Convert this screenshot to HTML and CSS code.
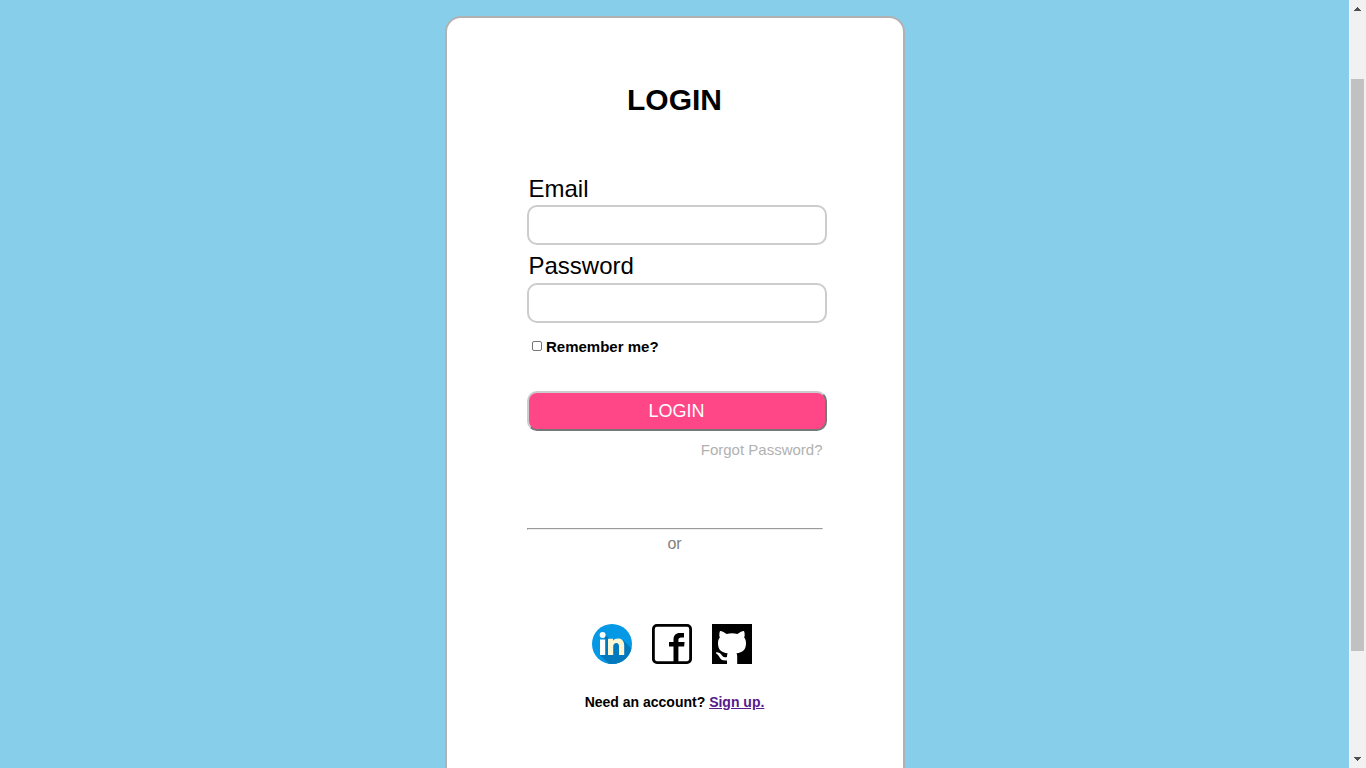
FILE: index.html
```html
<!DOCTYPE html>
<html lang="en">
<head>
<meta charset="utf-8">
<title>Login</title>
<link rel="stylesheet" href="styles.css">
</head>
<body>
<main class="page">
  <form class="card">
    <h1 class="title">LOGIN</h1>
    <label class="label" for="email">Email</label>
    <input class="field" id="email" type="email">
    <label class="label label-next" for="password">Password</label>
    <input class="field" id="password" type="password">
    <label class="remember"><input class="check" type="checkbox"><span>Remember me?</span></label>
    <button class="submit" type="button">LOGIN</button>
    <div class="forgot">Forgot Password?</div>
    <hr class="rule">
    <div class="or">or</div>
    <div class="socials">
      <svg width="40" height="40" viewBox="0 0 40 40">
        <defs><clipPath id="disc"><circle cx="20" cy="20" r="20"/></clipPath></defs>
        <circle cx="20" cy="20" r="20" fill="#0599e5"/>
        <path d="M8 31L13.500 11L20 17L31 16L44 29V44H21Z" fill="#0379bd" clip-path="url(#disc)"/>
        <circle cx="10.600" cy="11" r="3" fill="#fff"/>
        <path d="M8 15.500h5.200V31H8z" fill="#fff"/>
        <path d="M16 14.800h5v2c1.200-1.600 2.700-2.400 4.900-2.400 4.200 0 6.300 2.600 6.300 7.200V31H27v-8.500c0-2.300-.8-3.500-2.500-3.500-2.200 0-3.300 1.500-3.300 3.800V31H16z" fill="#fff6d2"/>
      </svg>
      <svg width="40" height="40" viewBox="0 0 40 40">
        <rect x="1.400" y="1.400" width="37.200" height="37.200" rx="3.500" fill="#fff" stroke="#000" stroke-width="2.800"/>
        <path d="M21.500 39V22.500H17V18h4.500v-2.200c0-4.500 2.200-6.800 6.500-6.800h4v4.600h-2.700c-2 0-2.900.9-2.900 2.700V18h6.200l-.5 4.500h-5.700V39z" fill="#000"/>
      </svg>
      <svg width="40" height="40" viewBox="0 0 40 40">
        <path d="M0 0h40v40H0z" fill="#000"/>
        <path d="M8 7C10.300 7 12.600 8.500 14.600 10c3.300-.9 7.500-.9 10.800 0C27.400 8.500 29.700 7 32 7c.9 2.400.9 4.600.2 6.500C33.500 15 34 17 34 19.300c0 6.700-3.500 9.300-9.500 10 .5 1 .7 2.100.7 3.700v7H15v-3.500c-4.300.5-6.200-.8-7.400-3.200-.8-1.700-1.800-2.800-3.500-3.900v-1.200c2.800-.1 4.500 1.200 5.700 3.100 1.200 1.900 2.700 2.400 5.200 1.600 0-1.400.1-2.600.6-3.600C9.500 28.600 6 26 6 19.300c0-2.300.5-4.300 1.800-5.800-.7-1.900-.7-4.100.2-6.500z" fill="#fff"/>
      </svg>
    </div>
    <div class="signup">Need an account? <a class="link" href="#">Sign up.</a></div>
  </form>
</main>
<aside class="scrollbar">
  <svg width="9" height="5" viewBox="0 0 9 5" shape-rendering="crispEdges"><path d="M4 0h1v1h1v1h1v1h1v1H1V3h1V2h1V1h1z" fill="#505050"/></svg>
  <div class="thumb"></div>
  <svg width="9" height="5" viewBox="0 0 9 5" shape-rendering="crispEdges"><path d="M1 0h7v1H7v1H6v1H5v1H4V3H3V2H2V1H1z" fill="#505050"/></svg>
</aside>
</body>
</html>
```
FILE: styles.css
```css
* { box-sizing: border-box; }
body {
  margin: 0;
  display: flex;
  height: 768px;
  overflow: hidden;
  background: skyblue;
  font-family: "Liberation Sans", Arial, sans-serif;
  color: #000;
}
.page { flex: 1; padding-top: 16px; padding-left: 445px; }
.card {
  display: flex;
  flex-direction: column;
  width: 460px;
  height: 752px;
  padding: 62px 80px 0;
  border: 2px solid #b1b1b1;
  border-bottom: 0;
  border-radius: 16px 16px 0 0;
  background: #fff;
}
.title { margin: 0; height: 94px; padding-right: 1px; font-size: 30px; line-height: 40px; text-align: center; }
.label { height: 31px; padding-left: 1.5px; font-size: 24px; line-height: 29px; }
.label-next { height: 38px; padding-top: 7px; line-height: 28px; }
.field {
  width: 300px;
  height: 40px;
  margin: 0;
  border: 2px solid #ccc;
  border-radius: 10px;
  background: #fff;
  flex: none;
}
.remember {
  display: flex;
  height: 68px;
  padding: 15px 0 0 5px;
  gap: 4px;
  font-size: 15px;
  font-weight: bold;
  line-height: 18px;
}
.check {
  appearance: none;
  width: 10px;
  height: 10px;
  margin: 3px 0 0;
  border: 1px solid #767676;
  border-radius: 2px;
  background: #fff;
}
.submit {
  width: 300px;
  height: 40px;
  padding: 0 1px 0 0;
  border: 2px solid;
  border-color: #ccc #777 #777 #ccc;
  border-radius: 10px;
  background: #ff4788;
  color: #fff;
  font: 18px "Liberation Sans", Arial, sans-serif;
}
.forgot { height: 97px; padding: 10px 0.5px 0 0; font-size: 15px; line-height: 18px; color: #b1b1b1; text-align: right; }
.rule { width: 296px; height: 2px; margin: 0; border: 1px solid; border-color: #9a9a9a #eee #eee #9a9a9a; }
.or { height: 94px; padding: 5px 1px 0 0; font-size: 16px; line-height: 18px; color: gray; text-align: center; }
.socials { display: flex; gap: 20px; height: 40px; padding-left: 65px; }
.signup { margin-top: 30px; padding-right: 1px; font-size: 14px; font-weight: bold; line-height: 16px; text-align: center; }
.link { color: #551a8b; }
.scrollbar {
  display: flex;
  flex-direction: column;
  align-items: center;
  width: 17px;
  padding: 7px 0 6px;
  border-left: 1px solid #f8f8f8;
  background: #f1f1f1;
}
.thumb { width: 13px; height: 572px; margin: 67px 1px 106px 0; background: #c1c1c1; }
.scrollbar svg { margin-right: 1px; }
```
